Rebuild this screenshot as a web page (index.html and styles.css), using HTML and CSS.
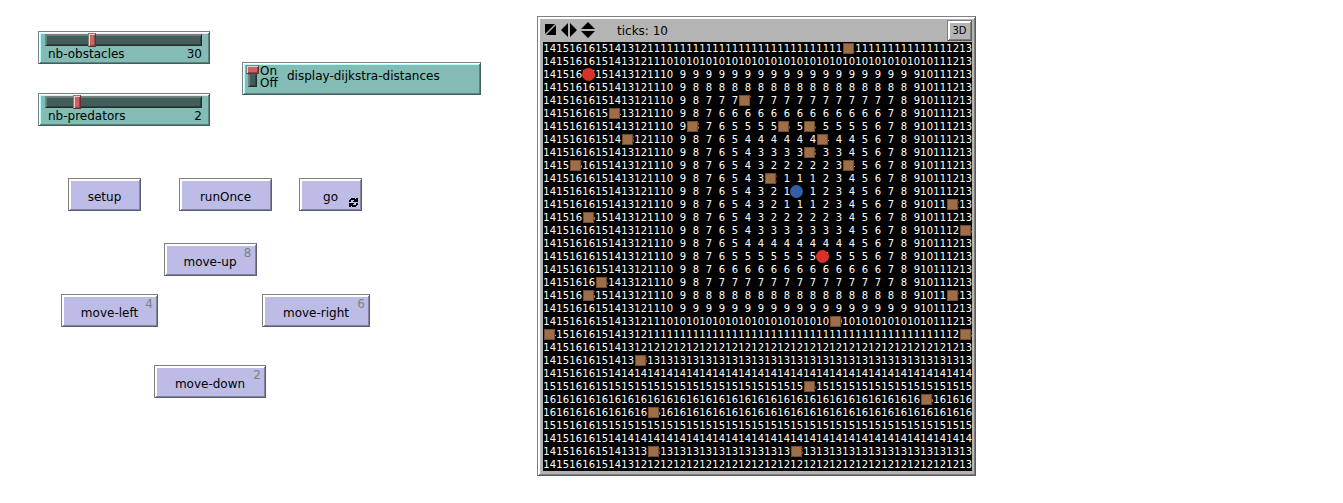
FILE: index.html
```html
<!DOCTYPE html>
<html lang="en">
<head>
<meta charset="utf-8">
<title>Dijkstra distances</title>
<link rel="stylesheet" href="styles.css">
</head>
<body>
<main class="interface">
  <section class="controls">
    <div class="settings">
      <div class="sliders">
        <div class="widget slider">
          <input class="range" type="range" id="nb-obstacles" min="0" max="104" value="30">
          <div class="caption"><label for="nb-obstacles">nb-obstacles</label><output for="nb-obstacles">30</output></div>
        </div>
        <div class="widget slider">
          <input class="range" type="range" id="nb-predators" min="0" max="11" value="2">
          <div class="caption"><label for="nb-predators">nb-predators</label><output for="nb-predators">2</output></div>
        </div>
      </div>
      <label class="widget switch">
        <input class="toggle" type="checkbox" checked>
        <span class="states"><span>On</span><span>Off</span></span>
        <span class="name">display-dijkstra-distances</span>
      </label>
    </div>

    <div class="commands">
      <button class="action setup">setup</button>
      <button class="action run-once">runOnce</button>
      <button class="action go">go
        <svg class="forever" viewBox="0 0 9 9" width="9" height="9" aria-hidden="true" shape-rendering="crispEdges">
          <path d="M2 0h4v1h1V0h2v4H4V3h1V2H2v2H0V2h1V1h1z"/>
          <path d="M7 9H3V8H2v1H0V5h5v1H4v1h3V5h2v2H8v1H7z"/>
        </svg>
      </button>
    </div>

    <div class="pad">
      <button class="action up">move-up<kbd class="key">8</kbd></button>
      <button class="action left">move-left<kbd class="key">4</kbd></button>
      <button class="action right">move-right<kbd class="key">6</kbd></button>
      <button class="action down">move-down<kbd class="key">2</kbd></button>
    </div>
  </section>

  <section class="view">
    <header class="bar">
      <svg class="resize" viewBox="0 0 53 17" width="53" height="17" aria-hidden="true">
        <path d="M2 2h10L2 12z M13 3v10H3z"/>
        <path d="M25 1v14l-7-7z M27 1v14l7-7z"/>
        <path d="M38 7h14l-7-7z M38 9h14l-7 7z"/>
      </svg>
      <span class="ticks">ticks: 10</span>
      <button class="three-d">3D</button>
    </header>
    <div class="world" id="world"></div>
  </section>
</main>
<script src="world.js"></script>
</body>
</html>
```
FILE: styles.css
```css
body {
  margin: 0;
  background: #fff;
  color: #000;
  font: 12px/14px "DejaVu Sans", sans-serif;
}

button, input { margin: 0; font: inherit; color: inherit; }

.interface {
  display: flex;
  align-items: flex-start;
  gap: 56px;
  padding: 16px 0 16px 38px;
}

.controls { padding-top: 15px; }

.settings {
  display: flex;
  align-items: center;
  gap: 32px;
}

.sliders {
  display: grid;
  gap: 29px;
}

.widget {
  box-sizing: border-box;
  height: 33px;
  background: #82bcb5;
  border: 1px solid;
  border-color: #808080 #415e5a #415e5a #808080;
  box-shadow: inset 1px 1px #fff, inset -1px -1px #5b837e, inset 2px 2px #b6ffff;
}

.slider {
  width: 172px;
  padding: 1px 7px 0 6px;
}

.range {
  display: block;
  width: 157px;
  height: 14px;
  appearance: none;
  background: none;
}

.range::-webkit-slider-runnable-track {
  box-sizing: border-box;
  height: 12px;
  background: #435e5a;
  border: 1px solid;
  border-color: #808080 #212f2d #212f2d #808080;
  box-shadow: inset 1px 1px #5e837e, inset -1px -1px #2f423f;
}

.range::-webkit-slider-thumb {
  appearance: none;
  box-sizing: border-box;
  width: 8px;
  height: 14px;
  margin-top: -2px;
  background: #c86464;
  border: 1px solid;
  border-color: #808080 #643232 #643232 #808080;
  box-shadow: inset 1px 1px #ffc8c8, inset -1px -1px #8c4646;
}

.caption {
  display: flex;
  justify-content: space-between;
  padding: 0 0 0 3px;
}

.switch {
  display: flex;
  width: 239px;
  padding: 2px 0 0 3px;
}

.toggle {
  display: grid;
  grid-template-rows: 9px 13px;
  justify-items: center;
  width: 13px;
  height: 22px;
  appearance: none;
}

.toggle::before, .toggle::after {
  content: "";
  box-sizing: border-box;
  border: 1px solid;
}

.toggle::before {
  width: 13px;
  background: #c86464;
  border-color: #808080 #643232 #643232 #808080;
  box-shadow: inset 1px 1px #ffc8c8, inset -1px -1px #8c4646;
}

.toggle::after {
  width: 9px;
  background: #435e5a;
  border-color: #435e5a #212f2d #212f2d #808080;
  box-shadow: inset 1px 0 #5e837e, inset -1px -1px #2f423f;
}

.states {
  display: grid;
  grid-auto-rows: 12px;
  width: 27px;
  padding-left: 1px;
  line-height: 12px;
}

.name { line-height: 22px; }

.action {
  position: relative;
  box-sizing: border-box;
  height: 33px;
  padding: 5px 0 0;
  background: #bcbce6;
  border: 1px solid;
  border-color: #808080 #5e5e73 #5e5e73 #808080;
  box-shadow: inset 1px 1px #fff, inset -1px -1px #8383a1, inset 2px 2px #fff;
}

.commands {
  display: grid;
  grid-template-columns: 111px 120px auto;
  margin-top: 52px;
  padding-left: 30px;
}

.setup { width: 73px; }
.run-once { width: 93px; }
.go { width: 63px; }

.forever {
  position: absolute;
  right: 3px;
  bottom: 3px;
}

.pad {
  display: grid;
  grid-template-columns: 97px 104px 108px;
  grid-template-areas: ". up ." "left . right" ". down .";
  row-gap: 18px;
  margin-top: 32px;
  padding-left: 23px;
}

.up { grid-area: up; width: 93px; justify-self: center; }
.left { grid-area: left; }
.right { grid-area: right; }
.down { grid-area: down; width: 112px; justify-self: center; margin-top: 20px; }

.key {
  position: absolute;
  top: 2px;
  right: 4px;
  font: inherit;
  color: #808080;
}

.view {
  padding: 2px 3px 4px 5px;
  background: #b4b4b4;
  border: 1px solid;
  border-color: #808080 #5a5a5a #5a5a5a #808080;
  box-shadow: inset 1px 1px #fff, inset -1px -1px #7e7e7e, inset 2px 2px #fff;
}

.bar {
  display: flex;
  align-items: center;
  height: 23px;
}

.ticks {
  flex: 1;
  padding-left: 21px;
}

.three-d {
  width: 25px;
  height: 21px;
  padding: 0;
  font-size: 10px;
  background: #b4b4b4;
  border: 1px solid;
  border-color: #808080 #5a5a5a #5a5a5a #808080;
  box-shadow: inset 1px 1px #fff, inset -1px -1px #7e7e7e, inset 2px 2px #fff;
}

.world {
  display: grid;
  grid-template-columns: repeat(33, 13px);
  grid-auto-rows: 13px;
  overflow: hidden;
  background: #000;
  color: #fff;
  font-size: 10px;
  line-height: 13px;
}

.patch {
  display: flex;
  justify-content: flex-end;
  position: relative;
}

.turtle {
  position: absolute;
  inset: 0;
  z-index: 1;
}

.obstacle {
  inset: 1px;
  background: #9d6e48;
  box-shadow: inset 0 0 0 1px #6e4d32;
}

.predator { background: #d73229; border-radius: 50%; }
.prey { background: #345da9; border-radius: 50%; }
```
FILE: world.js
```js
const SIZE = 33;
const prey = [19, 11];
const predators = [[3, 2], [21, 16]];
const obstacles = [
  [23, 0], [15, 4], [5, 5], [11, 6], [18, 6], [20, 6], [6, 7], [21, 7], [20, 8],
  [2, 9], [23, 9], [17, 10], [31, 12], [3, 13], [32, 14], [4, 18], [3, 19], [31, 19],
  [22, 21], [0, 22], [32, 22], [7, 24], [20, 26], [29, 27], [8, 28], [8, 31], [19, 31]
];

const world = document.getElementById("world");

// Distance along one axis of a world whose edges wrap round.
function wrapped(a, b) {
  const d = Math.abs(a - b);
  return Math.min(d, SIZE - d);
}

const patches = [];
for (let y = 0; y < SIZE; y++) {
  for (let x = 0; x < SIZE; x++) {
    const patch = document.createElement("div");
    patch.className = "patch";
    const distance = Math.max(wrapped(x, prey[0]), wrapped(y, prey[1]));
    if (distance > 0) patch.textContent = distance;
    patches.push(patch);
    world.append(patch);
  }
}

function place(kind, [x, y]) {
  const turtle = document.createElement("span");
  turtle.className = "turtle " + kind;
  patches[y * SIZE + x].append(turtle);
}

obstacles.forEach(at => place("obstacle", at));
predators.forEach(at => place("predator", at));
place("prey", prey);
```
